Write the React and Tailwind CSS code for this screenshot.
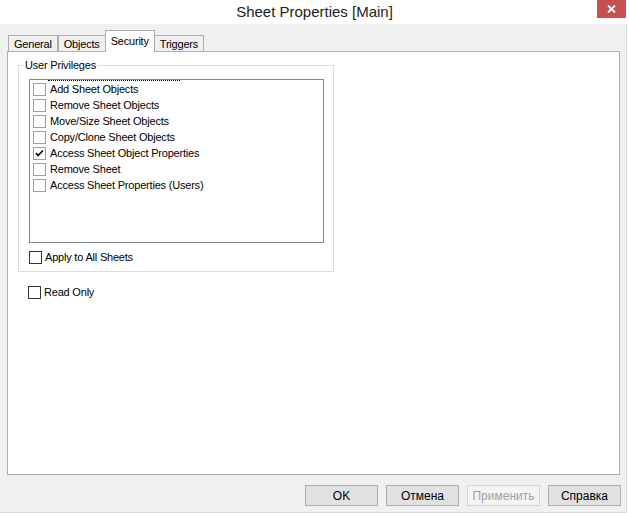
import React from 'react';

const items = [
  { label: 'Add Sheet Objects', checked: false },
  { label: 'Remove Sheet Objects', checked: false },
  { label: 'Move/Size Sheet Objects', checked: false },
  { label: 'Copy/Clone Sheet Objects', checked: false },
  { label: 'Access Sheet Object Properties', checked: true },
  { label: 'Remove Sheet', checked: false },
  { label: 'Access Sheet Properties (Users)', checked: false },
];

function Box({ checked, light }) {
  return (
    <span
      className={`w-[13px] h-[13px] shrink-0 bg-white border flex items-center justify-center ${
        light ? 'border-[#a0a0a0]' : 'border-[#333333]'
      }`}
    >
      {checked && (
        <svg width="9" height="9" viewBox="0 0 9 9">
          <path d="M1 4 L3 6.5 L8 1.5" fill="none" stroke="#000" strokeWidth="1.6" />
        </svg>
      )}
    </span>
  );
}

function Tab({ label, active }) {
  return active ? (
    <div className="h-[22px] -mt-[4px] px-[5px] bg-white border border-b-0 border-[#adadad] relative z-10 flex items-start pt-[2px] -mx-[1px]">
      {label}
    </div>
  ) : (
    <div className="h-[17px] px-[5px] bg-[#f0f0f0] border border-b-0 border-[#adadad] flex items-center">
      {label}
    </div>
  );
}

function Button({ children, disabled }) {
  return (
    <div
      className={`w-[73px] h-[21px] flex items-center justify-center border ${
        disabled
          ? 'border-[#d5d5d5] bg-[#f4f4f4] text-[#a0a0a0]'
          : 'border-[#adadad] bg-[#e1e1e1] text-black'
      }`}
    >
      {children}
    </div>
  );
}

export default function App() {
  return (
    <div
      className="w-[629px] h-[516px] bg-white flex flex-col text-[11px] tracking-[-0.2px] text-black overflow-hidden"
      style={{ fontFamily: 'Tahoma, "Liberation Sans", Arial, sans-serif' }}
    >
      {/* title bar */}
      <div className="h-[24px] shrink-0 flex items-start relative tracking-normal">
        <div className="flex-1 text-center text-[15px] pt-[1px] text-[#222]" style={{ fontFamily: '"Liberation Sans", Arial, sans-serif' }}>
          Sheet Properties [Main]
        </div>
        <div className="absolute right-[3px] top-0 w-[29px] h-[18px] bg-[#c75050] flex items-center justify-center">
          <svg width="9" height="8" viewBox="0 0 9 8">
            <path d="M1 0.5 L8 7.5 M8 0.5 L1 7.5" stroke="#fff" strokeWidth="1.8" />
          </svg>
        </div>
      </div>

      {/* body */}
      <div className="w-[627px] h-[489px] bg-[#f0f0f0] border-r border-b border-[#d9d9d9] flex flex-col px-[7px]">
        <div className="h-[11px] shrink-0" />
        <div className="flex items-end h-[17px] pl-[1px] shrink-0">
          <Tab label="General" />
          <Tab label="Objects" />
          <Tab label="Security" active />
          <Tab label="Triggers" />
        </div>

        {/* tab panel */}
        <div className="w-[613px] h-[424px] bg-white border border-[#adadad] -mt-px pl-[10px] pt-[13px] flex flex-col">
          {/* group box */}
          <div className="w-[316px] h-[207px] border border-[#dcdcdc] relative pl-[10px] pt-[13px] flex flex-col">
            <div className="absolute -top-[7px] left-[5px] bg-white px-[1px] leading-[13px]">User Privileges</div>
            <div className="w-[295px] h-[164px] border border-[#828790] pt-[1px] relative">
              <div className="absolute left-[18px] top-0 w-[132px] border-t border-dotted border-black" />
              {items.map((it) => (
                <div key={it.label} className="h-[16px] flex items-center pl-[3px] gap-[4px]">
                  <Box checked={it.checked} light />
                  <span>{it.label}</span>
                </div>
              ))}
            </div>
            <div className="flex items-center gap-[3px] mt-[6px]">
              <Box />
              <span>Apply to All Sheets</span>
            </div>
          </div>
          <div className="flex items-center gap-[3px] mt-[12px] ml-[10px]">
            <Box />
            <span>Read Only</span>
          </div>
        </div>

        {/* buttons */}
        <div className="flex justify-end gap-[8px] mt-[10px] -mr-[2px] text-[12px] tracking-normal" style={{ fontFamily: '"Liberation Sans", Arial, sans-serif' }}>
          <Button>OK</Button>
          <Button>Отмена</Button>
          <Button disabled>Применить</Button>
          <Button>Справка</Button>
        </div>
      </div>
    </div>
  );
}
